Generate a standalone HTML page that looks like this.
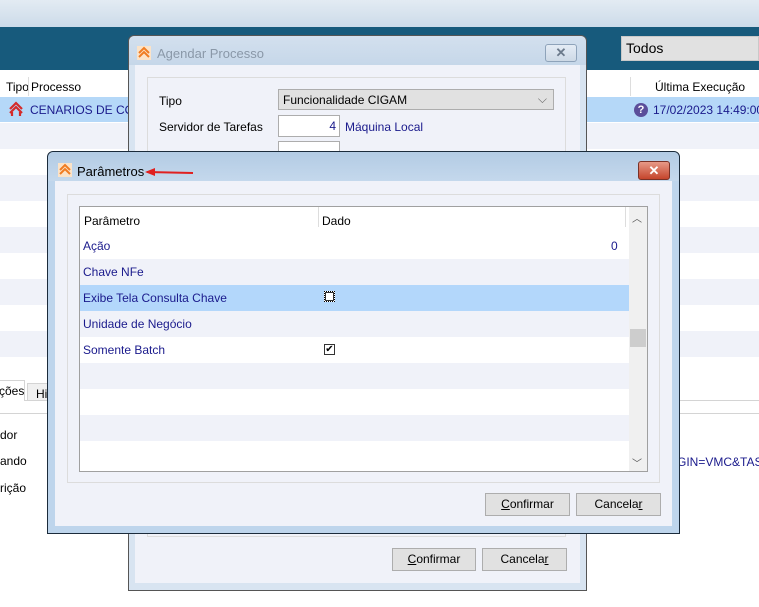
<!DOCTYPE html>
<html><head><meta charset="utf-8"><style>
*{margin:0;padding:0;box-sizing:border-box}
body{width:759px;height:607px;overflow:hidden;background:#fff;font-family:"Liberation Sans",sans-serif;font-size:12px;color:#000;position:relative}
.a{position:absolute;white-space:nowrap}
.blue{color:#1a1a8c}
.btn{position:absolute;background:#e1e1e1;border:1px solid #adadad;text-align:center;line-height:20px;font-size:12px}
</style></head><body>
<div class="a" style="left:0;top:0;width:759px;height:27px;background:linear-gradient(#e3ebf3,#ccdbe9)"></div>
<div class="a" style="left:0;top:27px;width:759px;height:43px;background:#175a7c"></div>
<div class="a" style="left:621px;top:36px;width:138px;height:25px;background:#e1e1e1;border:1px solid #c9c9c9;font-size:14px;line-height:23px;padding-left:4px">Todos</div>
<div class="a" style="left:6px;top:80px">Tipo</div>
<div class="a" style="left:28px;top:77px;width:1px;height:19px;background:#ddd"></div>
<div class="a" style="left:31px;top:80px">Processo</div>
<div class="a" style="left:630px;top:77px;width:1px;height:19px;background:#ddd"></div>
<div class="a" style="left:655px;top:80px">Última Execução</div>
<div class="a" style="left:0;top:97px;width:759px;height:25px;background:#b5d8f8"></div>
<svg class="a" style="left:9px;top:101px" width="14" height="16" viewBox="0 0 14 16"><path d="M1 8 L7 2 L13 8 M1 12 L7 6 L13 12 M3 15 V11 M11 15 V11" stroke="#d42a2a" stroke-width="2.2" fill="none"/></svg>
<div class="a blue" style="left:30px;top:103px">CENARIOS DE COMP</div>
<div class="a" style="left:634px;top:103px;width:14px;height:14px;border-radius:50%;background:#5b4e9a;color:#fff;font-size:11px;font-weight:bold;text-align:center;line-height:14px">?</div>
<div class="a blue" style="left:653px;top:103px">17/02/2023 14:49:00</div>
<div class="a" style="left:0;top:123px;width:759px;height:26px;background:#f0f2f9"></div>
<div class="a" style="left:0;top:175px;width:759px;height:26px;background:#f0f2f9"></div>
<div class="a" style="left:0;top:227px;width:759px;height:26px;background:#f0f2f9"></div>
<div class="a" style="left:0;top:279px;width:759px;height:26px;background:#f0f2f9"></div>
<div class="a" style="left:0;top:331px;width:759px;height:26px;background:#f0f2f9"></div>
<div class="a" style="left:0;top:400px;width:759px;height:1px;background:#d4d4d4"></div>
<div class="a" style="left:0;top:413px;width:759px;height:1px;background:#d4d4d4"></div>
<div class="a" style="left:-2px;top:380px;width:27px;height:21px;background:#fff;border:1px solid #d4d4d4;border-bottom:none;padding:3px 0 0 0">ções</div>
<div class="a" style="left:27px;top:383px;width:30px;height:18px;background:#f0f0f0;border:1px solid #d4d4d4;padding:3px 0 0 8px">His</div>
<div class="a" style="left:0;top:428px">dor</div>
<div class="a" style="left:0;top:454px">ando</div>
<div class="a" style="left:0;top:481px">rição</div>
<div class="a blue" style="left:677px;top:455px">GIN=VMC&amp;TASK</div>

<div class="a" style="left:128px;top:35px;width:459px;height:556px;background:#d8e4f1;border:1px solid #555;border-radius:6px 6px 0 0"></div>
<div class="a" style="left:129px;top:36px;width:457px;height:29px;background:linear-gradient(#d3e0ee,#c6d7e9);border-radius:6px 6px 0 0"></div>
<svg class="a" style="left:137px;top:46px" width="14" height="14" viewBox="0 0 14 14"><rect width="14" height="14" fill="#fbe3c8"/><path d="M2 7 L7 2 L12 7 M2 11 L7 6 L12 11" stroke="#f07c22" stroke-width="2" fill="none"/></svg>
<div class="a" style="left:157px;top:46px;font-size:13px;color:#8a98a8">Agendar Processo</div>
<div class="a" style="left:545px;top:44px;width:32px;height:18px;border:1px solid #8ea3ba;border-radius:3px;background:linear-gradient(#e4ecf5,#cdd9e6);text-align:center;color:#6b7a8b;font-size:13px;line-height:16px;font-weight:bold">✕</div>
<div class="a" style="left:135px;top:65px;width:445px;height:518px;background:#f0f2f9"></div>
<div class="a" style="left:147px;top:77px;width:419px;height:460px;border:1px solid #dcdcdc"></div>
<div class="a" style="left:159px;top:94px">Tipo</div>
<div class="a" style="left:278px;top:89px;width:276px;height:21px;background:#e1e1e1;border:1px solid #adadad;padding:3px 0 0 4px">Funcionalidade CIGAM<span style="position:absolute;right:6px;top:2px;color:#666">⌵</span></div>
<div class="a" style="left:159px;top:120px">Servidor de Tarefas</div>
<div class="a" style="left:278px;top:115px;width:62px;height:22px;background:#fff;border:1px solid #adadad;text-align:right;padding:3px 3px 0 0"><span class="blue">4</span></div>
<div class="a blue" style="left:345px;top:120px">Máquina Local</div>
<div class="a" style="left:278px;top:141px;width:62px;height:12px;background:#fff;border:1px solid #adadad"></div>
<div class="btn" style="left:392px;top:548px;width:84px;height:23px"><u>C</u>onfirmar</div>
<div class="btn" style="left:482px;top:548px;width:85px;height:23px">Cancela<u>r</u></div>

<div class="a" style="left:47px;top:151px;width:633px;height:383px;background:#bed5ec;border:1px solid #1b2b3b;border-radius:6px 6px 0 0"></div>
<div class="a" style="left:48px;top:152px;width:631px;height:29px;background:linear-gradient(#b3cbe4,#c4d8ec);border-radius:6px 6px 0 0"></div>
<svg class="a" style="left:58px;top:163px" width="14" height="14" viewBox="0 0 14 14"><rect width="14" height="14" fill="#fbe3c8"/><path d="M2 7 L7 2 L12 7 M2 11 L7 6 L12 11" stroke="#f07c22" stroke-width="2" fill="none"/></svg>
<div class="a" style="left:77px;top:164px;font-size:13px">Parâmetros</div>
<svg class="a" style="left:145px;top:167px" width="50" height="10"><path d="M2 5 L48 6" stroke="#e02020" stroke-width="2"/><path d="M0 5 L10 1 L10 9Z" fill="#e02020"/></svg>
<div class="a" style="left:638px;top:161px;width:32px;height:19px;border:1px solid #7a3126;border-radius:3px;background:linear-gradient(#e79a87,#c5452c);text-align:center;color:#fff;font-size:13px;line-height:17px;font-weight:bold">✕</div>
<div class="a" style="left:55px;top:181px;width:617px;height:345px;background:#f0f2f9"></div>
<div class="a" style="left:67px;top:194px;width:593px;height:289px;border:1px solid #dcdcdc"></div>
<div class="a" style="left:79px;top:206px;width:569px;height:266px;border:1px solid #a0a0a0;background:#fff;overflow:hidden">
 <div class="a" style="left:0;top:52px;width:549px;height:26px;background:#f0f2f9"></div>
 <div class="a" style="left:0;top:78px;width:549px;height:26px;background:#b3d7fb"></div>
 <div class="a" style="left:0;top:104px;width:549px;height:26px;background:#f0f2f9"></div>
 <div class="a" style="left:0;top:156px;width:549px;height:26px;background:#f0f2f9"></div>
 <div class="a" style="left:0;top:208px;width:549px;height:26px;background:#f0f2f9"></div>
 <div class="a" style="left:238px;top:0;width:1px;height:20px;background:#ddd"></div>
 <div class="a" style="left:545px;top:0;width:1px;height:20px;background:#ddd"></div>
 <div class="a" style="left:4px;top:7px">Parâmetro</div>
 <div class="a" style="left:242px;top:7px">Dado</div>
 <div class="a blue" style="left:3px;top:32px">Ação</div>
 <div class="a blue" style="left:531px;top:32px">0</div>
 <div class="a blue" style="left:3px;top:58px">Chave NFe</div>
 <div class="a blue" style="left:3px;top:84px">Exibe Tela Consulta Chave</div>
 <div class="a" style="left:244px;top:84px;width:11px;height:11px;border:1px dotted #000;outline:1px solid #333;outline-offset:-2px;background:#fff"></div>
 <div class="a blue" style="left:3px;top:110px">Unidade de Negócio</div>
 <div class="a blue" style="left:3px;top:136px">Somente Batch</div>
 <div class="a" style="left:244px;top:137px;width:11px;height:11px;border:1px solid #333;background:#fff;font-size:10px;line-height:9px;text-align:center">✔</div>
 <div class="a" style="left:549px;top:0;width:18px;height:264px;background:#f0f0f0"></div>
 <div class="a" style="left:552px;top:3px;color:#555;font-size:10px">︿</div>
 <div class="a" style="left:552px;top:248px;color:#555;font-size:10px">﹀</div>
 <div class="a" style="left:550px;top:122px;width:16px;height:18px;background:#cdcdcd"></div>
</div>
<div class="btn" style="left:485px;top:493px;width:85px;height:23px"><u>C</u>onfirmar</div>
<div class="btn" style="left:576px;top:493px;width:85px;height:23px">Cancela<u>r</u></div>
</body></html>
